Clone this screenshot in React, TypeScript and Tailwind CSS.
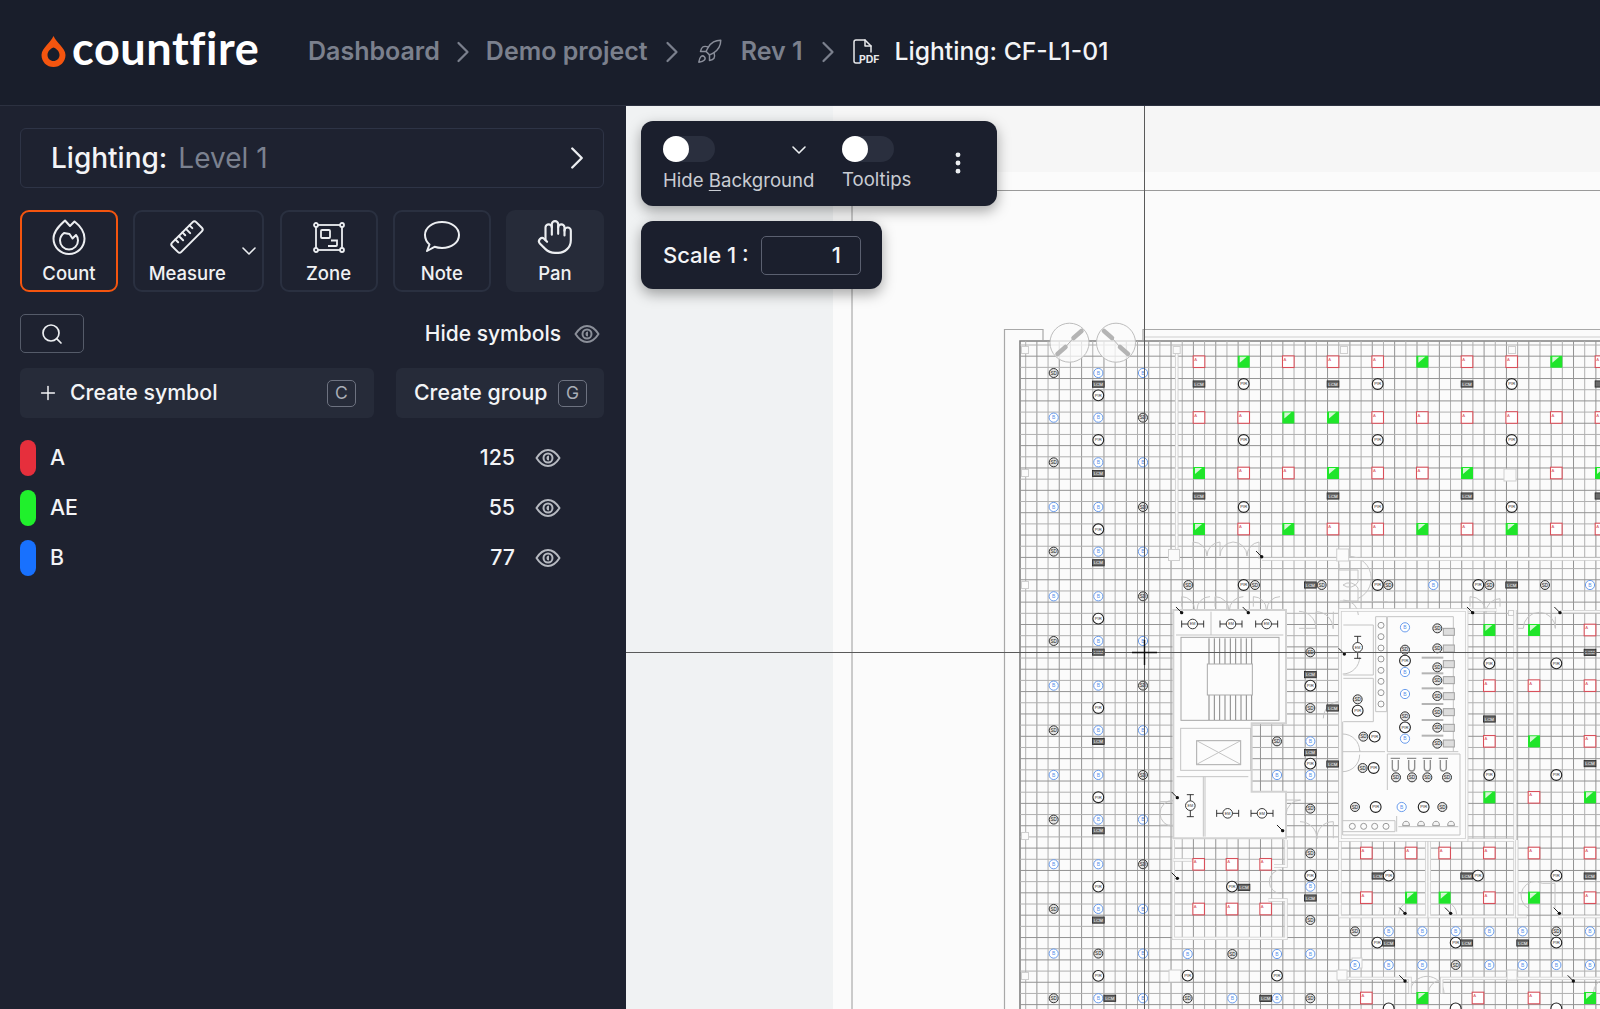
import React from "react";
import {
  ChevronDown,
  ChevronRight,
  EllipsisVertical,
  Hand,
  Plus,
  Rocket,
  Search,
} from "lucide-react";

type Sym = [string, number, number];

const FONT = "font-['Inter',_'Liberation_Sans',_sans-serif]";

// reference coordinates of the lower right part of the plan are kept in 3x units
const zx = (x: number) => 1150 + x / 3;
const zy = (y: number) => 580 + y / 3;
const yk = (k: number) => 373 + 22.33 * k;

const row = (t: string, y: number, xs: number[]): Sym[] =>
  xs.map((x) => [t, zx(x), zy(y)]);
const col = (t: string, x: number, ys: number[]): Sym[] =>
  ys.map((y) => [t, zx(x), zy(y)]);

function buildSymbols(): Sym[] {
  const out: Sym[] = [];
  const X1 = 1053.7;
  const X2 = 1098.3;
  const X3 = 1143;
  for (let k = 0; k <= 28; k += 2) out.push([k % 4 === 0 ? "S" : "B", X1, yk(k)]);
  [0, 2, 4, 6, 8, 10, 12, 14, 16, 18, 20, 22, 24, 28].forEach((k) => out.push(["B", X2, yk(k)]));
  [1, 3, 7, 11, 15, 19, 23, 27].forEach((k) => out.push(["P", X2, yk(k)]));
  [0.5, 4.5, 8.5, 12.5, 16.5, 20.5, 24.5].forEach((k) => out.push(["L", X2, yk(k)]));
  out.push(["S", X2, yk(26)], ["L", X2 + 11.5, yk(28)]);
  [0, 4, 8, 12, 16, 20, 24, 26, 28].forEach((k) => out.push(["B", X3, yk(k)]));
  [2, 6, 10, 14, 18, 22].forEach((k) => out.push(["S", X3, yk(k)]));

  // big open office, top right
  const xs = [1199, 1243.7, 1288.3, 1333, 1377.7, 1422.3, 1467, 1511.7, 1556.3, 1601];
  const grid: [number, string][] = [
    [361.7, "AGAAAGAAGA"],
    [417.5, "AAGGAAAAAA"],
    [473, "GAAGAAG.AG"],
    [529, "GAGAAGAGAA"],
  ];
  grid.forEach(([y, s]) =>
    s.split("").forEach((c, i) => {
      if (c !== ".") out.push([c, xs[i], y]);
    })
  );
  [1199, 1333, 1467, 1601].forEach((x) => out.push(["L", x, 384], ["L", x, 496]));
  [1243.7, 1377.7, 1511.7].forEach((x) => out.push(["P", x, 384], ["P", x, 440], ["P", x, 507]));

  out.push(
    ...row("S", 15, [115, 315, 515, 715, 1018, 1185]),
    ...row("P", 15, [281, 683, 985]),
    ...row("L", 15, [481, 1085]),
    ...row("B", 15, [850, 1320]),
    // riser column
    ...col("S", 481, [217, 384, 686, 820, 1020]),
    ...col("L", 481, [284, 518, 954]),
    ...col("P", 481, [317, 551, 887]),
    ...col("B", 481, [484, 585, 920]),
    ...col("L", 548, [384, 552]),
    ...row("S", 484, [381]),
    ...row("B", 585, [381]),
    // washroom core
    ...col("B", 765, [142, 276, 342, 476]),
    ...col("S", 862, [145, 205, 262, 301, 348, 396, 443, 491]),
    ...col("S", 765, [209, 409]),
    ...col("P", 765, [242, 442]),
    ...row("S", 470, [640]),
    ...row("P", 470, [674]),
    ...row("S", 564, [638]),
    ...row("P", 564, [671]),
    ...row("S", 358, [623]),
    ...row("P", 392, [623]),
    ...row("S", 592, [738, 786, 832, 891]),
    ...row("S", 681, [615, 877]),
    ...row("P", 681, [677, 821]),
    ...row("B", 681, [755]),
    // right of core
    ...row("G", 150, [1018, 1152]),
    ...row("A", 150, [1320]),
    ...row("P", 250, [1018, 1219]),
    ...row("A", 317, [1018, 1152, 1320]),
    ...row("L", 217, [1320]),
    ...row("L", 417, [1018]),
    ...row("A", 484, [1018, 1320]),
    ...row("G", 484, [1152]),
    ...row("L", 551, [1320]),
    ...row("P", 585, [1018, 1219]),
    ...row("G", 652, [1018, 1320]),
    ...row("A", 652, [1152]),
    // lower rooms
    ...row("A", 853, [146, 246, 347]),
    ...row("A", 987, [146, 246, 347]),
    ...row("P", 920, [246]),
    ...row("L", 922, [282]),
    ...row("A", 819, [649, 783, 884, 1018, 1152, 1320]),
    ...row("L", 888, [684, 950, 1320]),
    ...row("P", 887, [716, 984, 1219]),
    ...row("A", 953, [649, 1018, 1320]),
    ...row("G", 953, [783, 884, 1152]),
    ...row("S", 1054, [615, 1219]),
    ...row("B", 1054, [716, 817, 917, 1018, 1118, 1320]),
    ...row("P", 1088, [682, 917, 1219]),
    ...row("L", 1089, [716, 950, 1118]),
    ...row("B", 1155, [615, 716, 817, 1018, 1118, 1219, 1320]),
    ...row("S", 1155, [917]),
    ...row("B", 1122, [113, 381, 481]),
    ...row("S", 1122, [247]),
    ...row("P", 1187, [113, 381]),
    ...row("S", 1255, [113, 481]),
    ...row("B", 1255, [247, 381]),
    ...row("L", 1255, [347]),
    ...row("A", 1254, [649, 984, 1152]),
    ...row("G", 1254, [817, 1320]),
    ...row("P", 1285, [716, 917, 1219])
  );
  return out;
}

const SYMBOLS = buildSymbols();

const SWITCHES: [number, number][] = [
  [95, 98], [295, 98], [968, 98], [1230, 98], [583, 222], [82, 653], [398, 752], [82, 895],
  [765, 1000], [902, 1000], [1228, 1000], [765, 1203], [1270, 1203],
];

function PlanSymbol({ s }: { s: Sym }) {
  const [t, x, y] = s;
  // symbols that the sheet edge cuts through keep their shape only
  const whole = x < 1594 && y < 1003;
  if (t === "A")
    return (
      <g>
        <rect x={x - 5.8} y={y - 5.8} width={11.6} height={11.6} fill="#fff" stroke="#d8505b" strokeWidth={1.1} />
        <text x={x - 4.8} y={y - 1} fontSize={4.2} fill="#d8505b">A</text>
      </g>
    );
  if (t === "G")
    return (
      <g>
        <rect x={x - 6} y={y - 6} width={12} height={12} fill="#1fe52a" />
        <polygon points={`${x - 4},${y - 5} ${x + 3},${y - 5} ${x - 4},${y + 1}`} fill="#d6f7d6" />
      </g>
    );
  if (t === "L")
    return (
      <g>
        <rect x={x - 5.9} y={y - 3.1} width={11.8} height={6.2} fill="#6a6a6a" stroke="#222" strokeWidth={0.8} />
        {whole && <text x={x} y={y + 1.6} fontSize={4.4} fill="#fff" textAnchor="middle">LCM</text>}
      </g>
    );
  if (t === "B")
    return (
      <g>
        <circle cx={x} cy={y} r={4.6} fill="#fff" stroke="#5a92ea" strokeWidth={0.9} />
        {whole && <text x={x} y={y + 1.8} fontSize={5} fill="#5a92ea" textAnchor="middle">B</text>}
      </g>
    );
  if (t === "P")
    return (
      <g>
        <circle cx={x} cy={y} r={5.4} fill="#fff" stroke="#222" strokeWidth={1.1} />
        {whole && <text x={x} y={y + 1.4} fontSize={4.2} fill="#333" textAnchor="middle">PIR</text>}
      </g>
    );
  return (
    <g>
      <circle cx={x} cy={y} r={4.5} fill="#e2e2e2" stroke="#333" strokeWidth={1} />
      {whole && <text x={x} y={y + 1.6} fontSize={4.6} fill="#222" textAnchor="middle">SD</text>}
    </g>
  );
}

function Wall({ pts }: { pts: [number, number][] }) {
  const p = pts.map(([x, y]) => `${zx(x)},${zy(y)}`).join(" ");
  return (
    <g fill="none">
      <polyline points={p} stroke="#cdcdcd" strokeWidth={3.4} />
      <polyline points={p} stroke="#fafafa" strokeWidth={1.8} />
    </g>
  );
}

function Light({ x, y, v }: { x: number; y: number; v?: boolean }) {
  const cx = zx(x);
  const cy = zy(y);
  return (
    <g stroke="#222" strokeWidth={0.9}>
      {v ? (
        <path d={`M${cx} ${cy - 11}V${cy + 11}M${cx - 3.5} ${cy - 11}h7M${cx - 3.5} ${cy + 11}h7`} />
      ) : (
        <path d={`M${cx - 11} ${cy}H${cx + 11}M${cx - 11} ${cy - 3.5}v7M${cx + 11} ${cy - 3.5}v7`} />
      )}
      <circle cx={cx} cy={cy} r={4.8} fill="#fff" />
      <text x={cx} y={cy + 1.3} fontSize={3.8} fill="#333" stroke="none" textAnchor="middle">EM</text>
    </g>
  );
}

function Fan({ cx, flip }: { cx: number; flip?: boolean }) {
  const d = flip ? -1 : 1;
  return (
    <g>
      <circle cx={cx} cy={342.7} r={19.5} fill="#fbfbfb" fillOpacity={0.75} stroke="#bdbdbd" strokeWidth={1} />
      <g stroke="#b4b4b4" strokeLinecap="round">
        <line x1={cx + 4 * d} y1={338} x2={cx + 12 * d} y2={331} strokeWidth={4.5} />
        <line x1={cx - 4 * d} y1={347} x2={cx - 12 * d} y2={354} strokeWidth={4.5} />
        <line x1={cx - 4 * d} y1={347} x2={cx + 4 * d} y2={338} strokeWidth={1} />
      </g>
    </g>
  );
}

function FloorPlan() {
  const vLines: number[] = [];
  for (let x = 1025.7; x < 1600; x += 11.18) vLines.push(x);
  const hLines: number[] = [];
  for (let y = 345; y < 1009; y += 11.18) hLines.push(y);

  const treads: number[] = [];
  for (let x = 177; x <= 305; x += 16) treads.push(x);

  return (
    <svg viewBox="626 106 974 903" className="absolute inset-0 h-full w-full" fontFamily="Liberation Sans, sans-serif">
      {/* sheet */}
      <rect x={626} y={106} width={974} height={903} fill="#fbfbfb" />
      <rect x={626} y={106} width={207} height={903} fill="#f0f2f3" />
      <rect x={833} y={106} width={767} height={66} fill="#f6f6f6" />
      <path d="M852 1009V190.5H1600" fill="none" stroke="#9a9a9a" strokeWidth={1} />

      {/* outer walls */}
      <path d="M1004.5 1009V329.5H1043V340M1143 340V329.5H1600" fill="none" stroke="#a8a8a8" strokeWidth={1.2} />
      <path d="M1020 1009V341H1600" fill="none" stroke="#808080" strokeWidth={1.6} />
      <path d="M1143 337H1600" fill="none" stroke="#cfcfcf" strokeWidth={1} />

      {/* ceiling grid */}
      {vLines.map((x, i) => (
        <line key={`v${i}`} x1={x} x2={x} y1={341} y2={1009} stroke={i % 2 ? "#939393" : "#b0b0b0"} strokeWidth={1} />
      ))}
      {hLines.map((y, i) => (
        <line key={`h${i}`} y1={y} y2={y} x1={1020} x2={1600} stroke={i % 2 ? "#939393" : "#b0b0b0"} strokeWidth={1} />
      ))}

      {/* fans */}
      <Fan cx={1069.500} />
      <Fan cx={1116} flip />

      {/* stair and lift block */}
      <polygon
        points={[[70, 90], [408, 90], [408, 430], [305, 430], [305, 635], [408, 635], [408, 775], [70, 775]]
          .map(([x, y]) => `${zx(x)},${zy(y)}`)
          .join(" ")}
        fill="#fcfcfc"
        stroke="#d2d2d2"
        strokeWidth={2}
      />
      {/* washroom core */}
      <rect x={zx(570)} y={zy(90)} width={126.7} height={230} fill="#fcfcfc" stroke="#d2d2d2" strokeWidth={2} />

      <g stroke="#c4c4c4" fill="none" strokeWidth={1}>
        <rect x={zx(93)} y={zy(172)} width={98} height={83} stroke="#a6a6a6" />
        {treads.map((x) => (
          <path key={x} d={`M${zx(x)} ${zy(175)}V${zy(252)}M${zx(x)} ${zy(345)}V${zy(420)}`} stroke="#858585" />
        ))}
        <rect x={zx(172)} y={zy(252)} width={45} height={31} fill="#fcfcfc" stroke="#aaa" />
        <rect x={zx(92)} y={zy(445)} width={70} height={42} />
        <rect x={zx(140)} y={zy(482)} width={44} height={24} stroke="#aaa" />
        <path d={`M${zx(140)} ${zy(482)}L${zx(272)} ${zy(553)}M${zx(272)} ${zy(482)}L${zx(140)} ${zy(553)}`} />
        <path d={`M${zx(78)} ${zy(165)}H${zx(400)}M${zx(183)} ${zy(95)}V${zy(165)}M${zx(160)} ${zy(590)}V${zy(770)}M${zx(165)} ${zy(590)}V${zy(770)}M${zx(80)} ${zy(590)}H${zx(295)}`} />
        {/* core partitions */}
        <path d={`M${zx(580)} ${zy(135)}H${zx(670)}V${zy(285)}H${zx(580)}M${zx(580)} ${zy(295)}H${zx(670)}V${zy(425)}H${zx(580)}`} />
        <path d={`M${zx(677)} ${zy(110)}H${zx(710)}V${zy(395)}H${zx(677)}ZM${zx(712)} ${zy(110)}V${zy(515)}H${zx(925)}M${zx(712)} ${zy(110)}H${zx(910)}V${zy(515)}`} />
        <path d={`M${zx(578)} ${zy(515)}H${zx(705)}M${zx(712)} ${zy(522)}H${zx(930)}V${zy(765)}H${zx(578)}V${zy(425)}M${zx(712)} ${zy(522)}V${zy(630)}M${zx(740)} ${zy(708)}V${zy(755)}M${zx(578)} ${zy(722)}H${zx(735)}V${zy(755)}H${zx(578)}M${zx(745)} ${zy(740)}H${zx(925)}`} />
        {[280, 325, 372, 420, 467, 233].map((y) => (
          <path key={y} d={`M${zx(815)} ${zy(y)}H${zx(880)}`} stroke="#b4b4b4" strokeWidth={2} />
        ))}
        {[155, 205, 252, 300, 348, 396, 443, 490].map((y) => (
          <rect key={y} x={zx(880)} y={zy(y - 10)} width={11} height={7} fill="#ddd" stroke="#a0a0a0" />
        ))}
        {[736, 785, 832, 880].map((x) => (
          <path key={x} d={`M${zx(x - 14)} ${zy(535)}h9.3M${zx(x - 9)} ${zy(540)}v8a3 3 0 0 0 6 0v-8`} stroke="#8f8f8f" strokeWidth={1.4} />
        ))}
        {[136, 170, 204, 237, 271, 304, 338, 372].map((y) => (
          <circle key={y} cx={zx(693)} cy={zy(y)} r={3} fill="#fcfcfc" stroke="#999" />
        ))}
        {[607, 641, 674, 708].map((x) => (
          <circle key={x} cx={zx(x)} cy={zy(739)} r={3} fill="#fcfcfc" stroke="#999" />
        ))}
        {[768, 813, 858, 903].map((x) => (
          <path key={x} d={`M${zx(x - 10)} ${zy(737)}a3.4 4.4 0 0 1 6.8 0z`} fill="#f4f4f4" stroke="#999" />
        ))}
        {/* doors */}
        <path d={`M${zx(95)} ${zy(80)}V${zy(50)}a13 13 0 0 1 13 13M${zx(180)} ${zy(50)}a13 13 0 0 0 -13 13M${zx(195)} ${zy(80)}V${zy(50)}a14 14 0 0 1 14 14M${zx(280)} ${zy(50)}a14 14 0 0 0 -14 14M${zx(310)} ${zy(80)}V${zy(50)}a13 13 0 0 1 13 13M${zx(390)} ${zy(50)}a13 13 0 0 0 -13 13`} />
        <path d={`M${zx(447)} ${zy(145)}H${zx(498)}V${zy(95)}M${zx(498)} ${zy(145)}a17 17 0 0 0 -17 -17M${zx(498)} ${zy(95)}a17 17 0 0 1 17 17H${zx(550)}V${zy(95)}`} />
        <path d={`M${zx(960)} ${zy(80)}V${zy(50)}a16 16 0 0 1 16 16a14 14 0 0 1 14 -14V${zy(80)}`} />
        <path d={`M${zx(1100)} ${zy(145)}H${zx(1120)}a16 16 0 0 1 32 0V${zy(110)}`} />
        <path d={`M${zx(578)} ${zy(462)}a17 17 0 0 1 17 17h1M${zx(578)} ${zy(282)}a17 17 0 0 0 17 -17M${zx(520)} ${zy(415)}a17 17 0 0 1 17 -17M${zx(578)} ${zy(575)}a17 17 0 0 0 17 -17`} />
        <path d={`M${zx(408)} ${zy(660)}H${zx(450)}M${zx(408)} ${zy(705)}a15 15 0 0 1 15 -15M${zx(450)} ${zy(725)}a17 17 0 0 1 17 17a16 16 0 0 1 16 -17H${zx(550)}V${zy(775)}`} />
        <path d={`M${zx(30)} ${zy(665)}H${zx(68)}M${zx(30)} ${zy(735)}H${zx(68)}M${zx(30)} ${zy(700)}a13 13 0 0 1 13 -13M${zx(30)} ${zy(700)}a13 13 0 0 0 13 13`} />
        <path d={`M${zx(358)} ${zy(905)}a12 12 0 0 1 12 -12M${zx(358)} ${zy(905)}a12 12 0 0 0 12 12`} />
        <path d={`M${zx(770)} ${zy(968)}a14 14 0 0 0 -8 12M${zx(896)} ${zy(968)}a14 14 0 0 1 8 12M${zx(1135)} ${zy(985)}a14 14 0 0 1 14 -25H${zx(1215)}V${zy(985)}`} />
        <path d={`M${zx(780)} ${zy(1240)}a17 17 0 0 1 17 -17a17 17 0 0 1 17 17M${zx(835)} ${zy(1240)}a13 13 0 0 1 13 -13`} />
        <path d={`M${zx(1330)} ${zy(1240)}a15 15 0 0 1 15 -15M${zx(580)} ${zy(60)}a15 15 0 0 1 15 15M${zx(578)} ${zy(65)}h45M${zx(625)} ${zy(55)}a18 18 0 0 0 -18 -40`} />
      </g>

      {/* partition walls */}
      <g>
        <path d="M1176.7 352V556" stroke="#cdcdcd" strokeWidth={3.5} />
        <path d="M1176.7 352V556" stroke="#fafafa" strokeWidth={1.8} />
        <path d="M1262 559H1600" stroke="#cdcdcd" strokeWidth={3.5} />
        <path d="M1262 559H1600" stroke="#fafafa" strokeWidth={1.8} />
        <path d="M1193 560V542a14 14 0 0 1 14 14a14 14 0 0 1 13 -14V556a14 14 0 0 1 13 -14a14 14 0 0 1 14 14a14 14 0 0 1 12 -14V559" fill="none" stroke="#c4c4c4" strokeWidth={1} />
        <path d="M1339 564V570H1358V582a10 10 0 0 1 -15 3a10 10 0 0 1 15 3V601H1340" fill="none" stroke="#c4c4c4" strokeWidth={1} />
        <Wall pts={[[70, 780], [70, 1075], [408, 1075], [408, 960], [355, 960]]} />
        <Wall pts={[[408, 780], [408, 858], [372, 858]]} />
        <Wall pts={[[70, 840], [125, 840]]} />
        <Wall pts={[[570, 780], [570, 1010], [830, 1010], [830, 780]]} />
        <Wall pts={[[838, 780], [838, 1010], [1095, 1010], [1095, 780], [950, 780]]} />
        <Wall pts={[[1100, 780], [1100, 1010], [1130, 1010]]} />
        <Wall pts={[[1225, 1010], [1350, 1010]]} />
        <Wall pts={[[1095, 90], [1095, 780]]} />
        <Wall pts={[[950, 90], [1040, 90]]} />
        <Wall pts={[[1230, 95], [1350, 95]]} />
        <Wall pts={[[590, 1195], [780, 1195], [780, 1240]]} />
        <Wall pts={[[875, 1240], [875, 1195], [1350, 1195]]} />
        <Wall pts={[[950, 90], [950, 780], [570, 780], [570, 90], [950, 90]]} />
      </g>

      {/* column boxes */}
      {[
        [1025, 350, 7], [1025, 473, 7], [1025, 585, 7], [1025, 836, 7], [1025, 976, 7],
        [1176.7, 350, 7], [1174, 555, 11], [1344, 350, 7], [1342.7, 555, 12], [1512, 350, 7],
        [1510, 475, 12], [1175, 976, 12], [1511, 613, 5], [1357, 963, 10], [1342, 975, 10], [1512, 975, 10],
      ].map(([x, y, s], i) => (
        <rect key={i} x={x - s / 2} y={y - s / 2} width={s} height={s} fill="#fbfbfb" stroke="#cfcfcf" strokeWidth={1} />
      ))}

      {/* emergency lights */}
      <Light x={128} y={132} />
      <Light x={243} y={132} />
      <Light x={350} y={132} />
      <Light x={233} y={700} />
      <Light x={336} y={700} />
      <Light x={623} y={202} v />
      <Light x={121} y={677} v />

      {SYMBOLS.map((s, i) => (
        <PlanSymbol key={i} s={s} />
      ))}

      {/* switches */}
      {SWITCHES.map(([x, y]) => (
        <g key={`${x}-${y}`}>
          <line x1={zx(x) - 5.7} y1={zy(y) - 5.7} x2={zx(x)} y2={zy(y)} stroke="#222" strokeWidth={1} />
          <circle cx={zx(x)} cy={zy(y)} r={1.7} fill="#111" />
        </g>
      ))}
      <line x1={1256} y1={551} x2={1261.7} y2={556.7} stroke="#222" strokeWidth={1} />
      <circle cx={1261.7} cy={556.7} r={1.7} fill="#111" />

      {/* crosshair cursor */}
      <path d="M1144.5 106V1009M626 652.5H1600" stroke="#5a5a5a" strokeWidth={1} />
      <path d="M1144.5 640V665M1132 652.5H1157" stroke="#111" strokeWidth={1.4} />
    </svg>
  );
}

function LogoFlame() {
  return (
    <svg viewBox="0 0 25 31" className="h-[31px] w-[25px] shrink-0">
      <path
        fillRule="evenodd"
        fill="#f4550f"
        d="M12.5 0c1.6 3.6 4.2 6 6.9 9.2 2.3 2.8 5.1 6 5.1 9.7C24.500 25.800 19.200 31 12.500 31S.5 25.800.5 18.900c0-3.700 2.800-6.900 5.100-9.700C8.300 6 10.900 3.600 12.500 0zm0 11.500c-3.600 1.500-6 4.300-6 7.400 0 3.400 2.700 6 6 6s6-2.600 6-6c0-3.100-2.400-5.900-6-7.400z"
      />
    </svg>
  );
}

function PdfIcon() {
  return (
    <div className="relative h-[25px] w-[25px] shrink-0">
      <svg viewBox="0 0 25 25" className="h-[25px] w-[25px]" fill="none" stroke="#e8e9ec" strokeWidth={1.5} strokeLinecap="round" strokeLinejoin="round">
        <path d="M7 24H3a2 2 0 0 1-2-2V3a2 2 0 0 1 2-2h9l6 6v6" />
        <path d="M12 1v6h6" />
      </svg>
      <span className="absolute bottom-[-1px] right-[-2px] text-[10.5px] font-bold leading-none text-[#e8e9ec]">PDF</span>
    </div>
  );
}

function CountIcon() {
  return (
    <svg viewBox="0 0 36 36" className="h-[36px] w-[36px]" fill="none" stroke="#eceef1" strokeWidth={2} strokeLinejoin="round" strokeLinecap="round">
      <path d="M14 1.500L19 7l4.500-4.500C28 6 33.500 12 33.500 19.500a15.500 15.500 0 0 1-31 0C2.500 12 9 6 14 1.500z" />
      <path d="M13 14c-2.500 2-4 4.500-4 7.500a9 9 0 0 0 18 0c0-2-.6-4-2-5.500l-3.500 3.500-3-4.500z" />
    </svg>
  );
}

function RulerIcon() {
  return (
    <svg viewBox="0 0 36 36" className="h-[36px] w-[36px]" fill="none" stroke="#eceef1" strokeWidth={2} strokeLinejoin="round" strokeLinecap="round">
      <g transform="rotate(-45 18 18)">
        <rect x="1" y="11.500" width="34" height="13" rx="2.500" />
        <path d="M8 11.500v4M13 11.500v6M18 11.500v4M23 11.500v6M28 11.500v4" />
      </g>
    </svg>
  );
}

function ZoneIcon() {
  return (
    <svg viewBox="0 0 36 36" className="h-[36px] w-[36px]" fill="none" stroke="#eceef1" strokeWidth={1.8}>
      <rect x="5" y="6" width="26" height="25" />
      <g fill="#1e2230">
        <circle cx="5" cy="6" r="2" />
        <circle cx="31" cy="6" r="2" />
        <circle cx="5" cy="31" r="2" />
        <circle cx="31" cy="31" r="2" />
      </g>
      <rect x="10" y="11" width="9" height="8" rx="1" />
      <path d="M20 21.500h6V26a1 1 0 0 1-1 1h-8" />
    </svg>
  );
}

function NoteIcon() {
  return (
    <svg viewBox="0 0 38 36" className="h-[36px] w-[38px]" fill="none" stroke="#eceef1" strokeWidth={2} strokeLinejoin="round">
      <path d="M4 32l2.500-6.500C3.500 22.800 2 19.500 2 16 2 8.500 9.500 3 19 3s17 5.500 17 13-7.500 13-17 13c-2.700 0-5.200-.4-7.500-1.200z" />
    </svg>
  );
}

function EyeIcon({ className }: { className: string }) {
  return (
    <svg viewBox="0 0 26 26" className={className} fill="none" stroke="currentColor" strokeWidth={2}>
      <path d="M1.500 13C5 7.500 9 5 13 5s8 2.500 11.500 8C21 18.500 17 21 13 21S5 18.500 1.500 13z" strokeLinejoin="round" />
      <circle cx="13" cy="13" r="4.500" />
      <path d="M14 10.500a2.500 2.500 0 0 0 0 5z" fill="currentColor" stroke="none" />
    </svg>
  );
}

function ToolButton({
  label,
  icon,
  className,
}: {
  label: string;
  icon: React.ReactNode;
  className: string;
}) {
  return (
    <div className={`flex h-[82px] flex-col items-center rounded-[9px] pt-[4px] ${className}`}>
      <div className="flex h-[42px] items-center">{icon}</div>
      <span className="mt-[3px] text-[18.5px] font-medium leading-[24px] text-[#f0f1f3]">{label}</span>
    </div>
  );
}

function Kbd({ children }: { children: string }) {
  return (
    <span className="flex h-[27px] w-[29px] items-center justify-center rounded-[5px] border-[1.5px] border-[#6d7280] text-[17.5px] text-[#a9adb6]">
      {children}
    </span>
  );
}

const GROUPS = [
  { name: "A", count: 125, color: "bg-[#e62f3c]" },
  { name: "AE", count: 55, color: "bg-[#20f02c]" },
  { name: "B", count: 77, color: "bg-[#1871fe]" },
];

function Toggle() {
  return (
    <div className="relative h-[26px] w-[52px] rounded-full bg-[#2a2f3e]">
      <div className="absolute left-0 top-0 h-[26px] w-[26px] rounded-full bg-white" />
    </div>
  );
}

function Sidebar() {
  return (
    <aside className="flex w-[626px] shrink-0 flex-col bg-[#1e2230] pl-5 pr-[22px] pt-[22px] text-[#f3f4f6]">
      <div className="flex h-[60px] items-center justify-between rounded-[6px] border border-[#2e3446] pl-[30px] pr-[7px]">
        <div className="text-[28px] leading-none">
          <span className="font-medium">Lighting:</span>
          <span className="ml-[11px] text-[#7b818f]">Level 1</span>
        </div>
        <ChevronRight size={38} strokeWidth={1.5} className="text-[#eceef1]" />
      </div>

      <div className="mt-[22px] flex justify-between">
        <ToolButton label="Count" icon={<CountIcon />} className="w-[98px] border-2 border-[#f4550f]" />
        <div className="relative w-[131px]">
          <ToolButton label="Measure" icon={<RulerIcon />} className="w-[131px] border-2 border-[#2a3040] pr-[23px]" />
          <ChevronDown size={24} strokeWidth={1.6} className="absolute right-[3px] top-[29px] text-[#eceef1]" />
        </div>
        <ToolButton label="Zone" icon={<ZoneIcon />} className="w-[98px] border-2 border-[#2a3040]" />
        <ToolButton label="Note" icon={<NoteIcon />} className="w-[98px] border-2 border-[#2a3040]" />
        <ToolButton label="Pan" icon={<Hand size={38} strokeWidth={1.35} className="text-[#eceef1]" />} className="w-[98px] border-2 border-transparent bg-[#262b39]" />
      </div>

      <div className="mt-[22px] flex h-[39px] items-center justify-between">
        <div className="flex h-[39px] w-[64px] items-center justify-center rounded-[5px] border-[1.5px] border-[#555b69]">
          <Search size={24} strokeWidth={1.7} className="text-[#eceef1]" />
        </div>
        <div className="flex items-center gap-[13px] pr-[4px]">
          <span className="text-[21px] font-medium">Hide symbols</span>
          <EyeIcon className="h-[26px] w-[26px] text-[#8b8f99]" />
        </div>
      </div>

      <div className="mt-[15px] flex h-[50px] justify-between">
        <div className="flex w-[354px] items-center rounded-[6px] bg-[#262b39] pl-[17px] pr-[18px]">
          <Plus size={22} strokeWidth={1.6} />
          <span className="ml-[11px] text-[21.3px] font-medium">Create symbol</span>
          <span className="ml-auto"><Kbd>C</Kbd></span>
        </div>
        <div className="flex w-[208px] items-center rounded-[6px] bg-[#262b39] pl-[18px] pr-[17px]">
          <span className="text-[21.3px] font-medium">Create group</span>
          <span className="ml-auto"><Kbd>G</Kbd></span>
        </div>
      </div>

      <div className="mt-[22px] flex flex-col gap-[14px]">
        {GROUPS.map((g) => (
          <div key={g.name} className="flex h-[36px] items-center pr-[43px]">
            <div className={`h-[36px] w-4 rounded-full ${g.color}`} />
            <span className="ml-[14px] text-[21.3px] font-medium">{g.name}</span>
            <span className="ml-auto text-[21.3px] font-medium">{g.count}</span>
            <EyeIcon className="ml-[20px] h-[26px] w-[26px] text-[#b6b9c0]" />
          </div>
        ))}
      </div>
    </aside>
  );
}

export default function App() {
  const crumb = "text-[25px] font-semibold text-[#7b808d]";
  return (
    <div className={`flex h-screen flex-col overflow-hidden ${FONT}`}>
      <header className="flex h-[106px] shrink-0 items-center border-b border-[#2c3140] bg-[#191e2b] pb-[2px] pl-[41px]">
        <div className="flex w-[267px] items-center">
          <LogoFlame />
          <span className="mb-[7px] ml-[6px] font-['Lato',_sans-serif] text-[45px] font-bold leading-none tracking-[0.6px] text-white">
            countfire
          </span>
        </div>
        <span className={crumb}>Dashboard</span>
        <span className="flex w-[46px] justify-center text-[#7b808d]"><ChevronRight size={36} strokeWidth={1.5} /></span>
        <span className={crumb}>Demo project</span>
        <span className="flex w-[48px] justify-center text-[#7b808d]"><ChevronRight size={36} strokeWidth={1.5} /></span>
        <Rocket size={27} strokeWidth={1.3} className="text-[#8a8e9a]" />
        <span className={`ml-[18px] ${crumb}`}>Rev 1</span>
        <span className="flex w-[50px] justify-center text-[#7b808d]"><ChevronRight size={36} strokeWidth={1.5} /></span>
        <PdfIcon />
        <span className="ml-[17px] text-[24.7px] font-medium text-[#f3f4f6]">Lighting: CF-L1-01</span>
      </header>

      <div className="flex min-h-0 flex-1">
        <Sidebar />
        <main className="relative min-w-0 flex-1 overflow-hidden bg-[#fbfbfb]">
          <FloorPlan />

          <div className="absolute left-[15px] top-[15px] flex h-[85px] w-[356px] rounded-[12px] bg-[#1b1f2d] pl-[22px] pt-[15px] shadow-[0_5px_14px_rgba(0,0,0,0.35)]">
            <div className="w-[179px]">
              <div className="flex items-start justify-between pr-[31px]">
                <Toggle />
                <ChevronDown size={24} strokeWidth={1.6} className="mt-[2px] text-[#eceef1]" />
              </div>
              <div className="mt-[4px] whitespace-nowrap text-[18.6px] leading-[28px] text-[#c9ccd3]">
                Hide <span className="underline underline-offset-[3px]">B</span>ackground
              </div>
            </div>
            <div className="w-[95px]">
              <Toggle />
              <div className="mt-[3px] text-[18.6px] leading-[28px] text-[#c9ccd3]">Tooltips</div>
            </div>
            <EllipsisVertical size={28} strokeWidth={2.2} className="ml-[7px] mt-[13px] text-[#eceef1]" />
          </div>

          <div className="absolute left-[15px] top-[115px] flex h-[68px] w-[241px] items-center rounded-[12px] bg-[#1b1f2d] pl-[22px] shadow-[0_5px_14px_rgba(0,0,0,0.35)]">
            <span className="text-[22px] font-medium text-[#f3f4f6]">Scale 1 :</span>
            <div className="ml-auto mr-[21px] flex h-[39px] w-[100px] items-center justify-end rounded-[5px] border-[1.5px] border-[#5b6070] pr-[19px] text-[22px] font-medium text-[#f3f4f6]">
              1
            </div>
          </div>
        </main>
      </div>
    </div>
  );
}
